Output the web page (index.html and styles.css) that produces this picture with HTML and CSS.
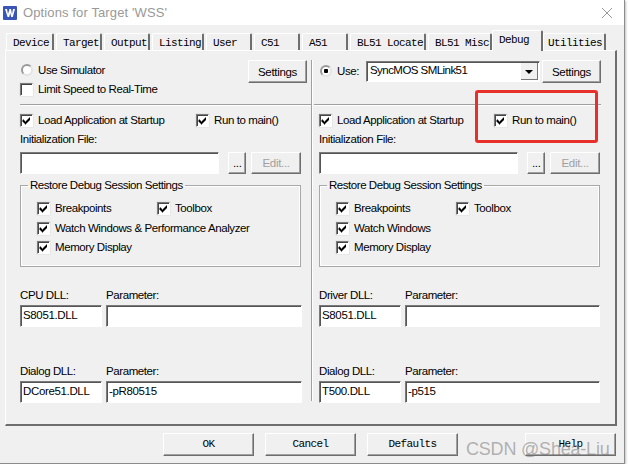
FILE: index.html
```html
<!DOCTYPE html>
<html lang="en">
<head>
  <meta charset="UTF-8" />
  <title>Options for Target 'WSS'</title>
  <link rel="stylesheet" href="styles.css">
</head>
<body>
  <svg class="defs" aria-hidden="true">
    <symbol id="tick" viewBox="0 0 9 9">
      <path d="M1 3.500h1v1h1v1h1v-1h1v-1h1v-1h1v-1h1v3h-1v1h-1v1h-1v1h-1v1h-1v-1h-1v-1h-1v-1h-1z" fill="#000"/>
    </symbol>
  </svg>

  <div class="window">
    <div class="titlebar">
      <svg class="app-icon" viewBox="0 0 14 14" aria-hidden="true">
        <rect width="14" height="14" rx="1" fill="#3a55b8"/>
        <path d="M2 3h2l1 5 1.500-5h1.500l1 5 1-5h2l-2.200 8h-1.600l-1-4-1 4h-1.600z" fill="#fff"/>
      </svg>
      <span class="title">Options for Target 'WSS'</span>
      <svg class="close" viewBox="0 0 10 10" aria-hidden="true">
        <path d="M0 0l10 10M10 0l-10 10" stroke="#9a9a9a" stroke-width="1" fill="none"/>
      </svg>
    </div>

    <div class="body">
      <div class="tabs">
        <span class="tab w48">Device</span>
        <span class="tab w46">Target</span>
        <span class="tab w46">Output</span>
        <span class="tab w52">Listing</span>
        <span class="tab w46">User</span>
        <span class="tab w46">C51</span>
        <span class="tab w46">A51</span>
        <span class="tab w76">BL51 Locate</span>
        <span class="tab w65">BL51 Misc</span>
        <span class="tab tab-active">Debug</span>
        <span class="tab w63">Utilities</span>
      </div>

      <div class="panel">
        <div class="col col-left">
          <div class="top-row">
            <div class="top-left">
              <label class="check"><span class="radio"></span>Use Simulator</label>
              <label class="check"><span class="box"></span>Limit Speed to Real-Time</label>
            </div>
            <button class="btn settings-left">Settings</button>
          </div>
          <div class="rule"></div>
          <div class="load-row">
            <label class="check load"><span class="box"><svg><use href="#tick"/></svg></span>Load Application at Startup</label>
            <label class="check"><span class="box"><svg><use href="#tick"/></svg></span>Run to main()</label>
          </div>
          <div class="caption init">Initialization File:</div>
          <div class="file-row">
            <div class="field file"></div>
            <button class="btn dots">...</button>
            <button class="btn edit">Edit...</button>
          </div>
          <fieldset class="group">
            <legend>Restore Debug Session Settings</legend>
            <div class="group-row">
              <label class="check g-first"><span class="box"><svg><use href="#tick"/></svg></span>Breakpoints</label>
              <label class="check"><span class="box"><svg><use href="#tick"/></svg></span>Toolbox</label>
            </div>
            <label class="check group-line"><span class="box"><svg><use href="#tick"/></svg></span>Watch Windows &amp; Performance Analyzer</label>
            <label class="check group-line"><span class="box"><svg><use href="#tick"/></svg></span>Memory Display</label>
          </fieldset>
          <div class="dll dll-first">
            <div><div class="caption">CPU DLL:</div><div class="field dll-name">S8051.DLL</div></div>
            <div><div class="caption">Parameter:</div><div class="field dll-param"></div></div>
          </div>
          <div class="dll dll-second">
            <div><div class="caption">Dialog DLL:</div><div class="field dll-name">DCore51.DLL</div></div>
            <div><div class="caption">Parameter:</div><div class="field dll-param">-pR80515</div></div>
          </div>
        </div>

        <div class="col col-right">
          <div class="top-row">
            <div class="use-row">
              <label class="check use-label"><span class="radio radio-on"></span>Use:</label>
              <div class="combo">SyncMOS SMLink51<span class="combo-arrow"></span></div>
            </div>
            <button class="btn settings-right">Settings</button>
          </div>
          <div class="rule"></div>
          <div class="load-row">
            <label class="check load"><span class="box"><svg><use href="#tick"/></svg></span>Load Application at Startup</label>
            <label class="check run"><span class="box"><svg><use href="#tick"/></svg></span>Run to main()</label>
          </div>
          <div class="caption init">Initialization File:</div>
          <div class="file-row">
            <div class="field file"></div>
            <button class="btn dots">...</button>
            <button class="btn edit">Edit...</button>
          </div>
          <fieldset class="group">
            <legend>Restore Debug Session Settings</legend>
            <div class="group-row">
              <label class="check g-first"><span class="box"><svg><use href="#tick"/></svg></span>Breakpoints</label>
              <label class="check"><span class="box"><svg><use href="#tick"/></svg></span>Toolbox</label>
            </div>
            <label class="check group-line"><span class="box"><svg><use href="#tick"/></svg></span>Watch Windows</label>
            <label class="check group-line"><span class="box"><svg><use href="#tick"/></svg></span>Memory Display</label>
          </fieldset>
          <div class="dll dll-first">
            <div><div class="caption">Driver DLL:</div><div class="field dll-name">S8051.DLL</div></div>
            <div><div class="caption">Parameter:</div><div class="field dll-param"></div></div>
          </div>
          <div class="dll dll-second">
            <div><div class="caption">Dialog DLL:</div><div class="field dll-name">T500.DLL</div></div>
            <div><div class="caption">Parameter:</div><div class="field dll-param">-p515</div></div>
          </div>
        </div>
      </div>

      <div class="buttons">
        <button class="btn btn-main">OK</button>
        <button class="btn btn-main">Cancel</button>
        <button class="btn btn-main">Defaults</button>
        <button class="btn btn-main btn-help">Help</button>
      </div>
    </div>
  </div>

  <!-- annotation and watermark sit over the screenshot -->
  <div class="highlight"></div>
  <div class="watermark">CSDN @Shea-Liu</div>
</body>
</html>
```

FILE: styles.css
```css
body {
  margin: 0;
  background: #fff;
  font-family: "Liberation Sans", sans-serif;
  font-size: 11.5px;
  color: #000;
  overflow: hidden;
}
.defs {
  display: none;
}

.window {
  width: 624px;
  height: 463px;
  background: #f0f0f0;
  border-right: 1px solid #8c8c8c;
  border-bottom: 1px solid #8c8c8c;
  box-shadow: 1px 1px 2px rgba(0,0,0,0.25);
}

/* Title bar */
.titlebar {
  height: 25px;
  background: #fff;
  display: flex;
  align-items: center;
  padding: 0 12px 0 3px;
}
.app-icon {
  width: 14px;
  height: 14px;
  margin-right: 6px;
}
.title {
  flex: 1;
  font-size: 13px;
  color: #999;
  letter-spacing: 0.12px;
}
.close {
  width: 10px;
  height: 10px;
}

.body {
  padding: 8px 0 0 5px;
}

/* Tabs */
.tabs {
  display: flex;
  height: 17px;
  padding-left: 1px;
  font-family: "Liberation Mono", monospace;
  font-size: 11px;
  letter-spacing: -0.6px;
}
.tab {
  box-sizing: border-box;
  height: 17px;
  margin-right: 2px;
  padding: 3px 0 0 6px;
  background: #f0f0f0;
  border-top: 1px solid #fff;
  border-left: 1px solid #fff;
  border-right: 2px solid #6e6e6e;
  border-radius: 2px 2px 0 0;
  white-space: nowrap;
}
.w48 { width: 48px; }
.w46 { width: 46px; }
.w52 { width: 52px; }
.w76 { width: 76px; }
.w65 { width: 64px; }
.w63 { width: 63px; margin-right: 0; padding-left: 4px; }
.tab-active {
  width: 51px;
  height: 21px;
  margin: -3px 0 -1px -2px;
  padding-top: 3px;
  position: relative;
  z-index: 1;
}

/* Main panel */
.panel {
  box-sizing: border-box;
  width: 612px;
  height: 376px;
  display: flex;
  padding: 9px 0 0 14px;
  border-top: 1px solid #fff;
  border-left: 1px solid #fff;
  border-right: 2px solid #6e6e6e;
  border-bottom: 2px solid #6e6e6e;
}
.col {
  height: 341px;
}
.col-left {
  width: 291px;
  border-right: 1px solid #a0a0a0;
  box-shadow: 1px 0 0 #fff;
}
.col-right {
  width: 287px;
  margin-left: 2px;
}
.col-right > * {
  margin-left: 5px;
}
.col-right > .rule {
  margin-left: 0;
}

.top-row {
  display: flex;
  justify-content: space-between;
  height: 38px;
}
.col-right .top-row {
  width: 282px;
}
.top-left .check {
  height: 18px;
}
.top-left .check:first-child {
  height: 20px;
}
.settings-left {
  width: 59px;
  height: 23px;
  margin-right: 4px;
}
.settings-right {
  width: 59px;
  height: 23px;
}
.use-row {
  display: flex;
  height: 22px;
}
.use-label {
  width: 47px;
}

.rule {
  height: 1px;
  margin-top: 6px;
  background: #a0a0a0;
  box-shadow: 0 1px 0 #fff;
}

.check {
  display: flex;
  align-items: center;
  white-space: nowrap;
  letter-spacing: -0.41px;
}
.box {
  box-sizing: border-box;
  width: 13px;
  height: 13px;
  flex: none;
  margin-right: 5px;
  padding: 1px;
  background: #fff;
  border: 1px solid;
  border-color: #7a7a7a #fff #fff #7a7a7a;
  box-shadow: inset 1px 1px 0 #444, 0 0 0 0.5px #ddd;
}
.box svg {
  display: block;
  width: 9px;
  height: 9px;
}
.radio {
  box-sizing: border-box;
  width: 12px;
  height: 12px;
  flex: none;
  margin: 0 5px 0 1px;
  background: #fff;
  border: 2px solid #9a9a9a;
  border-right-color: #e4e4e4;
  border-bottom-color: #e4e4e4;
  border-radius: 50%;
}
.radio-on {
  background: radial-gradient(circle, #000 0 2px, #fff 2.5px);
}

.combo {
  box-sizing: border-box;
  position: relative;
  width: 174px;
  height: 21px;
  margin-top: 1px;
  padding: 2px 0 0 3px;
  background: #fff;
  border: 1px solid;
  border-color: #7a7a7a #fff #fff #7a7a7a;
  box-shadow: inset 1px 1px 0 #555;
  letter-spacing: -0.55px;
}
.combo-arrow {
  position: absolute;
  top: 1px;
  right: 1px;
  bottom: 1px;
  width: 17px;
  background: #f0f0f0;
  border-left: 1px solid #fff;
  box-shadow: inset -1px -1px 0 #777;
}
.combo-arrow::after {
  content: "";
  position: absolute;
  top: 7px;
  left: 4px;
  border: 4px solid transparent;
  border-top-color: #000;
  border-bottom: 0;
}

.btn {
  box-sizing: border-box;
  padding: 0;
  background: #f0f0f0;
  border: 1px solid;
  border-color: #fff #6e6e6e #6e6e6e #fff;
  box-shadow: inset -1px -1px 0 #a0a0a0;
  font-family: "Liberation Sans", sans-serif;
  font-size: 11.5px;
  letter-spacing: -0.3px;
  color: #000;
}

.load-row {
  display: flex;
  height: 16px;
  margin-top: 7px;
}
.load {
  width: 176px;
}
.col-right .load {
  width: 175px;
}
.caption {
  height: 15px;
  line-height: 15px;
  letter-spacing: -0.41px;
  white-space: nowrap;
}
.init {
  margin-top: 4px;
}
.file-row {
  display: flex;
  margin-top: 5px;
  width: 281px;
}
.field {
  box-sizing: border-box;
  height: 22px;
  background: #fff;
  border: 1px solid;
  border-color: #7a7a7a #fff #fff #7a7a7a;
  box-shadow: inset 1px 1px 0 #555;
  padding: 3px 0 0 2px;
  white-space: nowrap;
  letter-spacing: -0.35px;
}
.file {
  width: 200px;
}
.dots {
  width: 18px;
  height: 22px;
  margin-left: 9px;
}
.edit {
  width: 50px;
  height: 22px;
  margin-left: 5px;
  color: #a0a0a0;
}

/* Group box */
.group {
  box-sizing: border-box;
  width: 281px;
  height: 89px;
  margin-top: 4px;
  margin-right: 0;
  margin-bottom: 0;
  padding: 8px 0 0 16px;
  border: 1px solid #a8a8a8;
  box-shadow: 0 0 0 1px #fff inset;
}
.col-left .group {
  margin-left: 0;
}
.group legend {
  margin-left: -9px;
  padding: 0 2px;
  letter-spacing: -0.45px;
  line-height: 14px;
}
.group-row {
  display: flex;
  height: 16px;
}
.g-first {
  width: 120px;
}
.group-line {
  height: 16px;
  margin-top: 4px;
}
.group-line + .group-line {
  margin-top: 3px;
}

/* DLL fields */
.dll {
  display: flex;
  gap: 4px;
}
.dll-first {
  margin-top: 21px;
}
.dll-second {
  margin-top: 37px;
}
.dll .caption {
  margin-bottom: 2px;
}
.dll-name {
  width: 82px;
}
.dll-param {
  width: 196px;
}
.col-right .dll-param {
  width: 195px;
}

/* Dialog buttons */
.buttons {
  display: flex;
  gap: 11px;
  width: 611px;
  margin-top: 7px;
  padding-left: 158px;
  box-sizing: border-box;
}
.btn-main {
  width: 91px;
  height: 23px;
  padding-bottom: 1px;
  font-family: "Liberation Mono", monospace;
  font-size: 11px;
  letter-spacing: -0.6px;
}
.btn-help {
  margin-left: auto;
}

/* Overlays */
.highlight {
  box-sizing: border-box;
  position: absolute;
  left: 475px;
  top: 90px;
  width: 123px;
  height: 53px;
  border: 3px solid #e8302a;
  border-radius: 3px;
}
.watermark {
  position: absolute;
  left: 466px;
  top: 439px;
  font-family: "Liberation Sans", sans-serif;
  font-size: 18px;
  letter-spacing: -0.2px;
  color: rgba(120,120,120,0.55);
  white-space: nowrap;
}
```
